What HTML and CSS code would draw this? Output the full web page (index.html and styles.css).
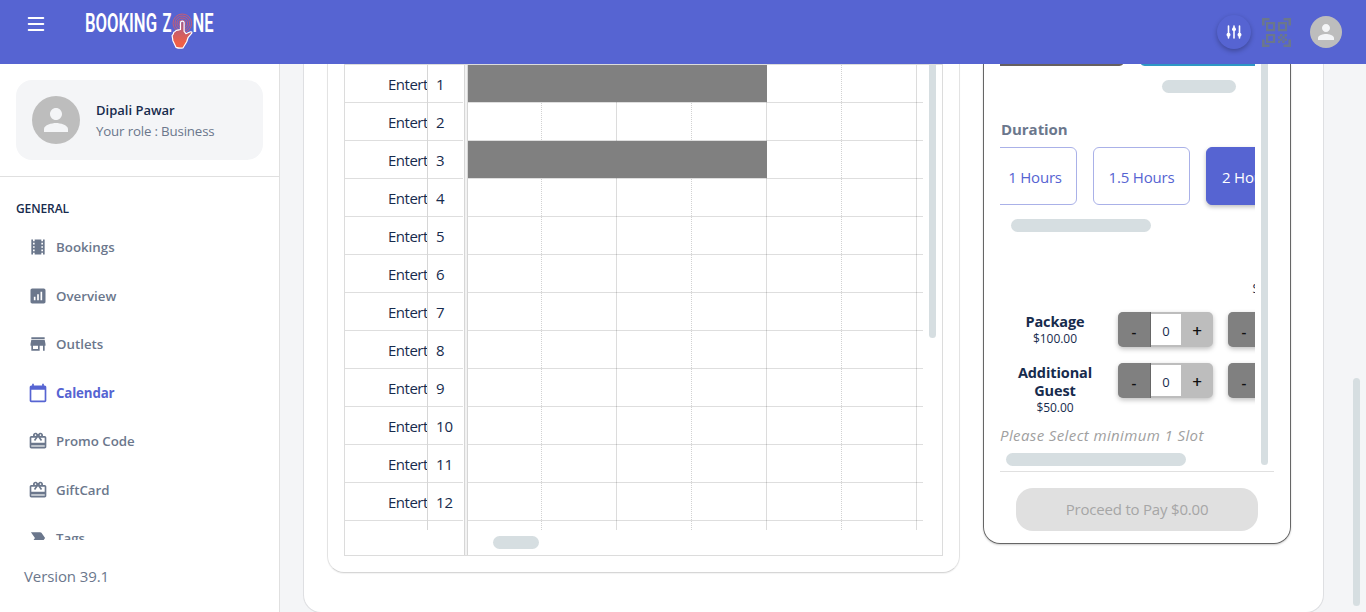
FILE: index.html
```
<!DOCTYPE html>
<html lang="en">
<head>
<meta charset="utf-8">
<title>Booking Zone</title>
<link rel="stylesheet" href="styles.css">
</head>
<body>
<svg width="0" height="0" class="defs">
  <symbol id="person" viewBox="0 0 24 24"><path d="M12 12c2.21 0 4-1.79 4-4s-1.79-4-4-4-4 1.79-4 4 1.79 4 4 4zm0 2c-2.67 0-8 1.34-8 4v2h16v-2c0-2.66-5.33-4-8-4z"/></symbol>
  <symbol id="gift" viewBox="0 0 24 24"><path opacity=".3" d="M4 17h16v2H4z"/><path d="M20 6h-2.18c.11-.31.18-.65.18-1 0-1.66-1.34-3-3-3-1.05 0-1.96.54-2.5 1.35l-.5.67-.5-.68C10.96 2.54 10.05 2 9 2 7.34 2 6 3.34 6 5c0 .35.07.69.18 1H4c-1.11 0-1.99.89-1.99 2L2 19c0 1.11.89 2 2 2h16c1.11 0 2-.89 2-2V8c0-1.11-.89-2-2-2zm-5-2c.55 0 1 .45 1 1s-.45 1-1 1-1-.45-1-1 .45-1 1-1zM9 4c.55 0 1 .45 1 1s-.45 1-1 1-1-.45-1-1 .45-1 1-1zm11 15H4v-2h16v2zm0-5H4V8h5.08L7 10.83 8.62 12 11 8.76l1-1.36 1 1.36L15.38 12 17 10.83 14.92 8H20v6z"/></symbol>
</svg>
<header class="topbar">
  <svg class="burger" viewBox="0 0 18 16" stroke="#fff" stroke-width="2.200" stroke-linecap="round"><path d="M1.800 2h14.400M1.800 8h14.400M1.800 14h14.400"/></svg>
  <svg class="logo" viewBox="0 0 132 40">
    <defs><linearGradient id="hand" x1="0" y1="0" x2="0" y2="1"><stop offset="0" stop-color="#a25a8c"/><stop offset=".8" stop-color="#ee6048"/></linearGradient></defs>
    <g fill="#fff" font-family="Roboto" font-weight="600" font-size="25">
      <text x="0" y="22.300" textLength="72" lengthAdjust="spacingAndGlyphs">BOOKING</text>
      <text x="77.500" y="22.300" textLength="9" lengthAdjust="spacingAndGlyphs">Z</text>
      <text x="107.500" y="22.300" textLength="21" lengthAdjust="spacingAndGlyphs">NE</text>
    </g>
    <g fill="none" stroke="#c95c70" stroke-width="1"><circle cx="97.300" cy="13.300" r="9.300"/><circle cx="97.300" cy="13.300" r="7.300"/><circle cx="97.300" cy="13.300" r="5.300"/><circle cx="97.300" cy="13.300" r="3.300"/></g>
    <path fill="url(#hand)" stroke="#fff" stroke-width="1.200" stroke-linejoin="round" d="M95.500 13q0-1.800 1.800-1.800T99.100 13v8.400l1.800 2.300 4.600-1.900q1.800-.2 1.300 1.300l-3.600 4.200-1.500 4.500-3.600 6q-3.600 1-7-.4l-3.200-6.700-.8-5 1.200-1.700q0-2.100 1.800-2.500 1-1.500 2.700-1.300l2.700-.7z"/>
  </svg>
  <div class="top-actions">
    <span class="tune"><svg viewBox="0 0 16 14" stroke="#fff" stroke-width="1.600" stroke-linecap="round"><path d="M2.500 1v12M8 1v12M13.500 1v12"/><g fill="#fff" stroke="none"><circle cx="2.500" cy="9.700" r="2"/><circle cx="8" cy="4.300" r="2"/><circle cx="13.500" cy="9.700" r="2"/></g></svg></span>
    <svg class="qr" viewBox="0 0 29 29" fill="none" stroke="#6b778c" stroke-width="2.600"><path d="M1.300 7.500V1.300H7.500M21.500 1.300h6.200V7.500M27.700 21.500v6.200H21.500M7.500 27.700H1.300V21.500"/><path stroke-width="2.200" d="M5.100 5.100h7v7h-7zM17 5.100h7v7h-7zM5.100 17h7v7h-7z"/><path stroke="none" fill="#6b778c" d="M18 16h2.500v2.500h-2.500zM22.500 16h2.500v2.500h-2.500zM20.200 18.200h2.500v2.500h-2.500zM16 18.200h2.300v2.500h-2.300zM22.500 20.500h2.500v2.300h-2.500zM18 20.500h2.500v2.300h-2.500zM16 22.500h2.300v2.500h-2.300zM20.200 22.500h2.500v2.500h-2.500z"/></svg>
    <span class="avatar small"><svg><use href="#person"/></svg></span>
  </div>
</header>
<div class="layout">
  <aside class="sidebar">
    <div class="profile">
      <span class="avatar"><svg><use href="#person"/></svg></span>
      <div class="who"><div class="name">Dipali Pawar</div><div class="role">Your role : Business</div></div>
    </div>
    <div class="menu">
      <div class="heading">GENERAL</div>
      <a class="item"><svg viewBox="0 0 24 24"><path d="M18 3v2h-2V3H8v2H6V3H4v18h2v-2h2v2h8v-2h2v2h2V3h-2zM8 17H6v-2h2v2zm0-4H6v-2h2v2zm0-4H6V7h2v2zm10 8h-2v-2h2v2zm0-4h-2v-2h2v2zm0-4h-2V7h2v2z"/></svg><span>Bookings</span></a>
      <a class="item"><svg viewBox="0 0 24 24"><path d="M19 3H5c-1.100 0-2 .9-2 2v14c0 1.100.9 2 2 2h14c1.100 0 2-.9 2-2V5c0-1.100-.9-2-2-2zM9 17H7v-4h2v4zm4 0h-2v-7h2v7zm4 0h-2V7h2v10z"/></svg><span>Overview</span></a>
      <a class="item"><svg viewBox="0 0 24 24"><path d="M20 4H4v2h16V4zm1 10v-2l-1-5H4l-1 5v2h1v6h10v-6h4v6h2v-6h1zm-9 4H6v-4h6v4z"/></svg><span>Outlets</span></a>
      <a class="item active"><svg viewBox="0 0 24 24"><path d="M20 3h-1V1h-2v2H7V1H5v2H4c-1.100 0-2 .9-2 2v16c0 1.100.9 2 2 2h16c1.100 0 2-.9 2-2V5c0-1.100-.9-2-2-2zm0 18H4V8h16v13z"/></svg><span>Calendar</span></a>
      <a class="item"><svg><use href="#gift"/></svg><span>Promo Code</span></a>
      <a class="item"><svg><use href="#gift"/></svg><span>GiftCard</span></a>
      <a class="item"><svg viewBox="0 0 24 24"><path d="M3.500 18.990l11 .01c.67 0 1.270-.33 1.630-.84L20.500 12l-4.370-6.160c-.36-.51-.96-.84-1.630-.84l-11 .01L8.340 12 3.500 18.990z"/></svg><span>Tags</span></a>
    </div>
    <div class="version">Version 39.1</div>
  </aside>
  <main class="main">
    <section class="page-card">
      <div class="calendar-card">
        <div class="scheduler">
          <div class="resources">
            <div class="row"><span class="type">Entertainment</span><span class="no">1</span></div>
            <div class="row"><span class="type">Entertainment</span><span class="no">2</span></div>
            <div class="row"><span class="type">Entertainment</span><span class="no">3</span></div>
            <div class="row"><span class="type">Entertainment</span><span class="no">4</span></div>
            <div class="row"><span class="type">Entertainment</span><span class="no">5</span></div>
            <div class="row"><span class="type">Entertainment</span><span class="no">6</span></div>
            <div class="row"><span class="type">Entertainment</span><span class="no">7</span></div>
            <div class="row"><span class="type">Entertainment</span><span class="no">8</span></div>
            <div class="row"><span class="type">Entertainment</span><span class="no">9</span></div>
            <div class="row"><span class="type">Entertainment</span><span class="no">10</span></div>
            <div class="row"><span class="type">Entertainment</span><span class="no">11</span></div>
            <div class="row"><span class="type">Entertainment</span><span class="no">12</span></div>
            <div class="row tail"><span class="type"></span></div>
          </div>
          <div class="splitter"></div>
          <div class="timeline">
            <div class="slots">
              <div class="cols"><i></i><i></i><i></i><i></i><i></i><i></i></div>
              <div class="lanes"><div><b></b></div><div></div><div><b></b></div><div></div><div></div><div></div><div></div><div></div><div></div><div></div><div></div><div></div></div>
            </div>
            <div class="hbar slots-bar"></div>
          </div>
          <div class="vbar grid-bar"></div>
        </div>
      </div>
      <div class="booking-card">
        <div class="scroll-area">
          <div class="details">
            <div class="tabs"><span></span><span></span></div>
            <div class="hbar tabs-bar"></div>
            <div class="label">Duration</div>
            <div class="durations"><button class="first">1 Hours</button><button>1.5 Hours</button><button class="on">2 Hours</button></div>
            <div class="hbar duration-bar"></div>
            <div class="slot-head">Slot</div>
            <div class="guests">
              <div class="guest"><div class="what"><strong>Package</strong><small>$100.00</small></div>
                <div class="stepper"><span class="minus">-</span><span class="count">0</span><span class="plus">+</span></div>
                <div class="stepper"><span class="minus">-</span><span class="count">0</span><span class="plus">+</span></div></div>
              <div class="guest"><div class="what"><strong>Additional Guest</strong><small>$50.00</small></div>
                <div class="stepper"><span class="minus">-</span><span class="count">0</span><span class="plus">+</span></div>
                <div class="stepper"><span class="minus">-</span><span class="count">0</span><span class="plus">+</span></div></div>
            </div>
            <div class="hint">Please Select minimum 1 Slot</div>
            <div class="hbar guests-bar"></div>
          </div>
          <div class="vbar details-bar"></div>
        </div>
        <div class="pay-row"><button class="pay">Proceed to Pay $0.00</button></div>
      </div>
    </section>
    <div class="vbar page-bar"></div>
  </main>
</div>
</body>
</html>
```

FILE: styles.css
```
* { box-sizing: border-box; }
body { margin: 0; height: 612px; overflow: hidden; display: flex; flex-direction: column; font-family: "Open Sans", "Noto Sans", sans-serif; font-size: 15px; color: #172b4d; background: #f4f5f7; }
.defs { display: none; }
button { font-family: inherit; margin: 0; padding: 0; }
.topbar { height: 64px; flex: none; display: flex; align-items: flex-start; background: #5664d2; }
.burger { width: 18px; height: 16px; margin: 16px 0 0 27px; }
.logo { width: 132px; height: 40px; margin: 10px 0 0 40px; }
.top-actions { margin: 15px 24px 0 auto; display: flex; align-items: flex-start; }
.tune { width: 34px; height: 34px; margin: 0 11px 0 0; border-radius: 50%; background: #5664d2; display: flex; align-items: center; justify-content: center; box-shadow: 0 2px 5px rgba(0,0,0,.28); }
.tune svg { width: 16px; height: 14px; }
.qr { width: 29px; height: 29px; margin: 3px 19px 0 0; }
.avatar { width: 48px; height: 48px; border-radius: 50%; background: #bdbdbd; display: flex; align-items: center; justify-content: center; fill: #f4f5f7; }
.avatar svg { width: 36px; height: 36px; }
.avatar.small { width: 32px; height: 32px; margin-top: 1px; }
.avatar.small svg { width: 24px; height: 24px; }
.layout { display: flex; height: 548px; }
.sidebar { width: 280px; flex: none; background: #fff; border-right: 1px solid #e0e0e0; display: flex; flex-direction: column; }
.profile { height: 80px; margin: 16px 16px 16px; padding: 16px; border-radius: 16px; background: #f4f5f7; display: flex; align-items: center; gap: 16px; font-size: 13.300px; line-height: 21px; }
.who { padding-top: 2px; }
.name { font-weight: 600; font-size: 13px; }
.role { color: #6b778c; letter-spacing: -.17px; }
.menu { height: 364px; overflow: hidden; border-top: 1px solid #e0e0e0; padding: 22px 16px 0; }
.heading { font-size: 12px; line-height: 20px; font-weight: 600; letter-spacing: -.1px; margin-bottom: 3.900px; }
.item { height: 48.500px; padding-left: 12px; display: flex; align-items: center; gap: 8px; color: #6b778c; fill: currentColor; font-size: 13.300px; font-weight: 600; }
.item svg { width: 20px; height: 20px; }
.item.active { color: #5664d2; font-weight: 700; letter-spacing: -.15px; }
.version { padding: 24px; line-height: 24px; color: #6b778c; letter-spacing: -.1px; }
.main { flex: 1; min-width: 0; display: flex; justify-content: space-between; padding: 0 6px 0 23px; }
.page-card { width: 1021px; height: 549px; background: #fff; border: 1px solid #dedfe2; border-top: 0; border-radius: 0 0 18px 18px; padding-left: 23px; display: flex; align-items: flex-start; gap: 23px; }
.calendar-card { width: 633px; height: 509px; border: 1px solid #e3e3e3; border-bottom-color: #d6d6d6; border-top: 0; border-radius: 0 0 17px 17px; padding: 0 16px; box-shadow: 0 1px 1px rgba(0,0,0,.05); }
.scheduler { width: 599px; height: 492px; border: 1px solid #dcdcdc; display: flex; }
.resources { width: 119px; padding-right: 1px; }
.row { height: 38px; display: flex; line-height: 39px; border-bottom: 1px solid #dedede; }
.row.tail { height: 9px; border: 0; }
.type { width: 83px; padding-left: 43px; overflow: hidden; border-right: 1px solid #d6d6d6; letter-spacing: -.5px; margin-bottom: -1px; }
.row.tail .type { margin: 0; }
.no { padding-left: 8px; }
.splitter { width: 4px; border: solid #d6d6d6; border-width: 0 1px; background: #f2f2f2; }
.timeline { width: 455px; }
.slots { display: grid; height: 465px; }
.cols, .lanes { grid-area: 1 / 1; }
.cols { display: flex; }
.cols i { width: 75px; border-right: 1px solid #dcdcdc; }
.cols i:first-child { width: 74px; }
.cols i:nth-child(odd) { border-right: 1px dotted #d2d2d2; }
.lanes div { height: 38px; border-bottom: 1px solid rgba(0,0,0,.13); }
.lanes b { display: block; width: 299px; height: 37px; background: #808080; }
.hbar { height: 13px; border-radius: 7px; background: #d6dee1; }
.slots-bar { width: 46px; margin: 6px 0 0 25px; }
.vbar { width: 7px; flex: none; background: #d6dee1; border-radius: 0 0 4px 4px; }
.grid-bar { height: 273px; margin-left: 6px; }
.booking-card { width: 308px; height: 480px; border: 1px solid #666; border-top: 0; border-radius: 0 0 17px 17px; padding: 0 16px; box-shadow: 0 1px 2px rgba(0,0,0,.2); }
.scroll-area { height: 408px; display: flex; gap: 6px; border-bottom: 1px solid #e0e0e0; width: 274px; }
.details { width: 255px; overflow: hidden; }
.tabs { display: flex; gap: 18px; height: 2px; }
.tabs span { width: 123px; flex: none; background: #666060; border-radius: 0 0 6px 6px / 0 0 2px 2px; }
.tabs span + span { background: #2e97c5; }
.tabs span:first-child { border-bottom-left-radius: 0; }
.tabs-bar { width: 74px; margin: 14px 0 0 162px; }
.label { margin-top: 26px; padding-left: 1px; line-height: 20px; font-weight: 700; color: #6b778c; letter-spacing: -.05px; }
.durations { display: flex; gap: 16px; height: 58px; margin: 8px 0 14px -20px; }
.durations button { width: 97px; flex: none; border: 1px solid #aab1e8; border-radius: 6px; background: #fff; color: #5664d2; font-size: 15px; letter-spacing: -.2px; padding: 1px 0 0; }
.durations .first { padding-left: 13px; }
.durations .on { padding: 1px 0 0 15px; text-align: left; background: #5664d2; border-color: #5664d2; color: #fff; box-shadow: 0 2px 4px rgba(0,0,0,.25); }
.duration-bar { width: 140px; margin-left: 11px; }
.slot-head { margin: 47px 0 0 252.500px; font-size: 12px; line-height: 20px; }
.guests { margin-top: 13px; width: 360px; }
.guest { display: flex; gap: 15px; height: 51px; }
.guest + .guest { height: 61px; }
.what { width: 80px; margin: 0 8px 0 15px; display: flex; flex-direction: column; align-items: center; text-align: center; }
.what strong { font-size: 14.500px; line-height: 18px; margin-top: 1px; letter-spacing: -.1px; }
.what small { font-size: 12px; line-height: 16px; letter-spacing: -.05px; }
.stepper { width: 95px; height: 35px; display: flex; flex: none; border-radius: 5px; overflow: hidden; background: #bdbdbd; color: #111; text-align: center; line-height: 38px; font-weight: 600; box-shadow: 0 2px 5px rgba(0,0,0,.25); }
.minus { width: 33px; background: #808080; border-right: 1px solid #666; }
.count { width: 30px; height: 31px; margin-top: 2px; background: #fff; color: #172b4d; font-weight: 400; font-size: 13px; line-height: 35px; }
.plus { width: 32px; font-size: 17px; }
.hint { font-style: italic; color: #a0a0a0; line-height: 22px; white-space: nowrap; letter-spacing: .39px; }
.guests-bar { width: 180px; margin: 7px 0 0 6px; }
.details-bar { height: 401px; }
.pay-row { padding: 16px; }
.pay { width: 242px; height: 43px; border: 0; border-radius: 17px; background: #e0e0e0; color: #a6a6a6; font-size: 15px; letter-spacing: -.2px; padding-bottom: 1px; }
.page-bar { height: 228px; margin-top: 314px; border-radius: 4px; }
```
